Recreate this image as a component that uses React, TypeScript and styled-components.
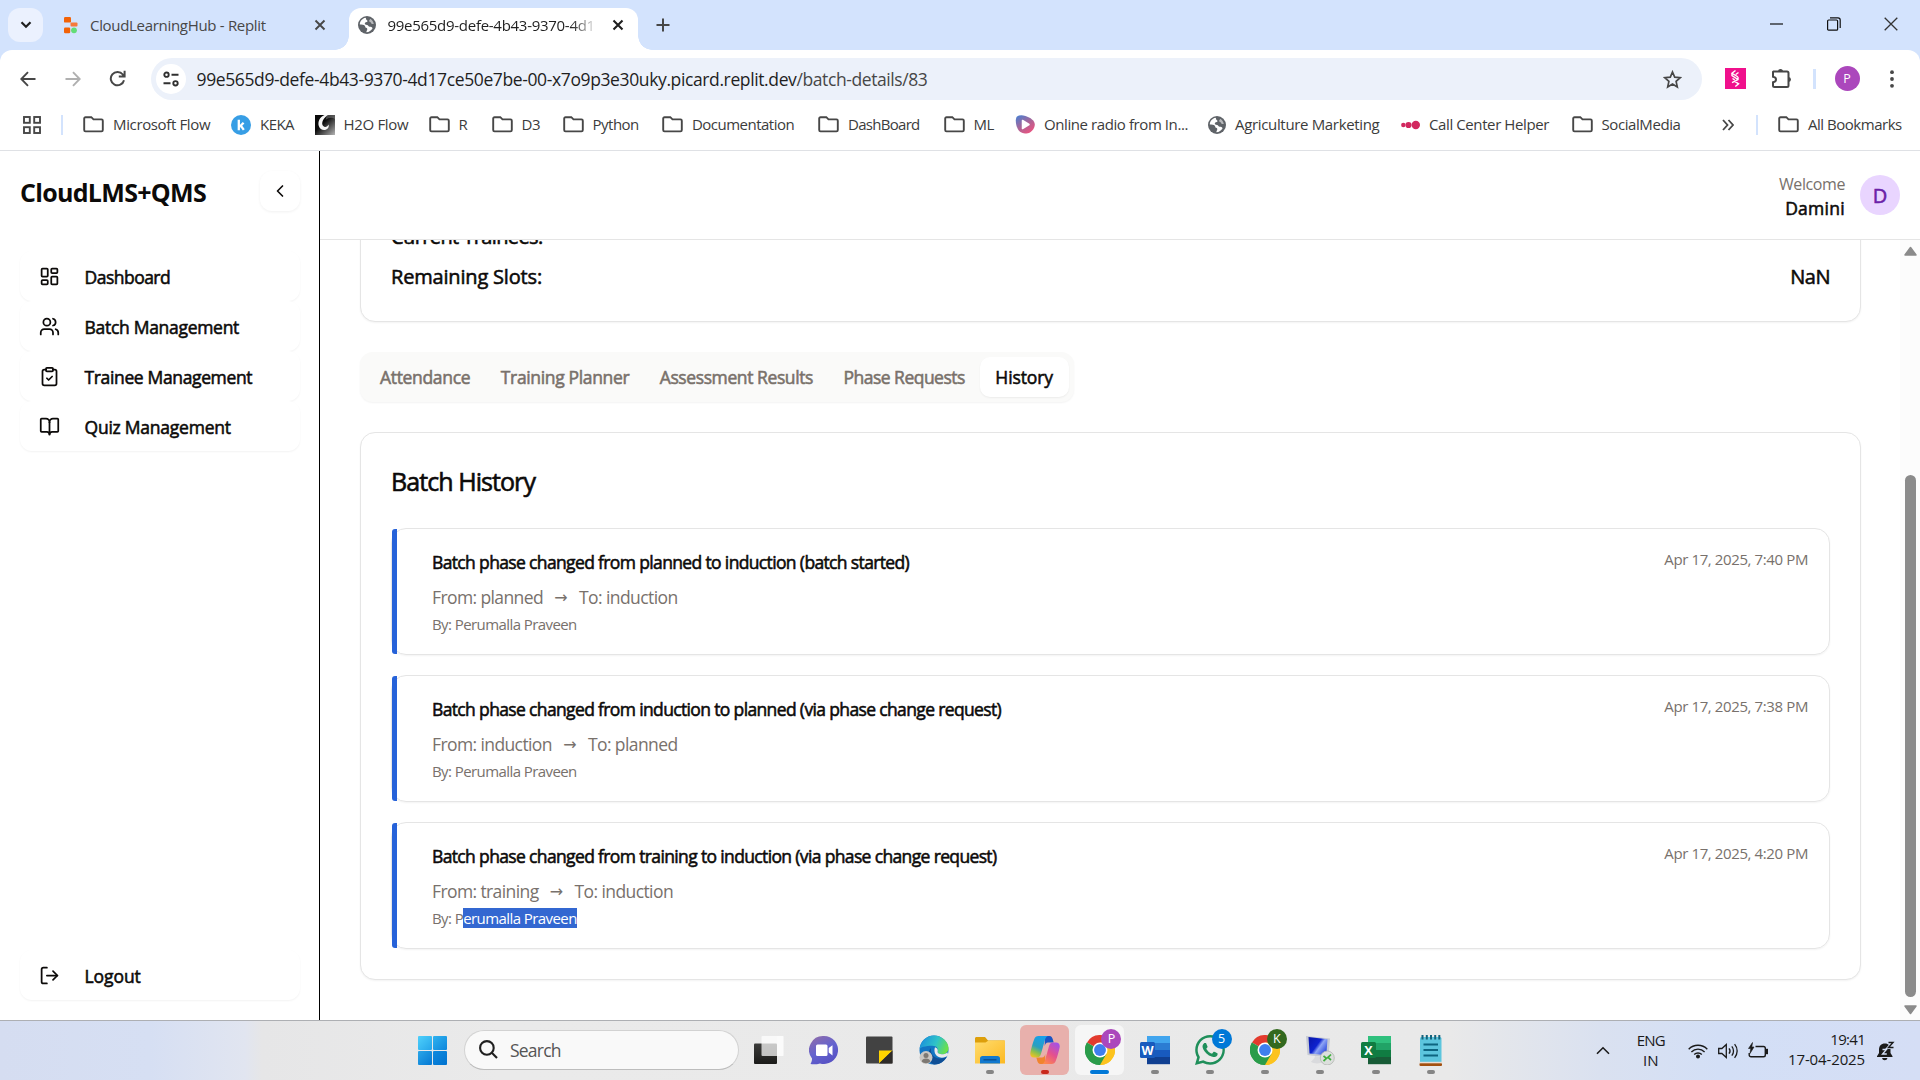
import React from 'react';
import styled, { createGlobalStyle, css } from 'styled-components';
import {
  BookOpen,
  ChevronLeft,
  ClipboardCheck,
  LayoutDashboard,
  LogOut,
  Users,
} from 'lucide-react';

const GlobalStyle = createGlobalStyle`
  *, *::before, *::after { box-sizing: border-box; }
  body {
    margin: 0;
    background: #fff;
    font-family: "Segoe UI", "Open Sans", "Noto Sans", sans-serif;
    color: #0c0a09;
    overflow: hidden;
  }
  svg { display: block; flex: none; }
`;

const medium = css`
  -webkit-text-stroke: 0.55px currentColor;
`;

const Screen = styled.div`
  width: 1920px;
  height: 1080px;
  display: flex;
  flex-direction: column;
  overflow: hidden;
`;

/* ---------- text ---------- */

const Text = styled.span<{ $size?: number; $track?: number; $color?: string; $medium?: boolean }>`
  font-size: ${(p) => p.$size ?? 15}px;
  letter-spacing: ${(p) => p.$track ?? 0}em;
  color: ${(p) => p.$color ?? 'inherit'};
  white-space: nowrap;
  ${(p) => p.$medium && medium}
`;

/* ---------- browser chrome ---------- */

const TabStrip = styled.div`
  height: 50px;
  flex: none;
  display: flex;
  background: #d3e3fd;
`;

const TabSearch = styled.div`
  width: 35px;
  height: 34px;
  margin: 8px 0 0 8px;
  border-radius: 12px;
  background: #ebf1fe;
  display: grid;
  place-items: center;
`;

const InactiveTab = styled.div`
  width: 305.5px;
  display: flex;
  align-items: center;
  padding-left: 20.5px;
  color: #474747;
`;

const ActiveTab = styled.div`
  position: relative;
  width: 289px;
  height: 42px;
  margin-top: 8px;
  padding: 0 0 8px 9.5px;
  display: flex;
  align-items: center;
  background: #fff;
  border-radius: 12px 12px 0 0;
  color: #1f1f1f;
  &::before,
  &::after {
    content: '';
    position: absolute;
    bottom: 0;
    width: 14px;
    height: 14px;
  }
  &::before {
    left: -14px;
    background: radial-gradient(circle at 0 0, transparent 13.5px, #fff 14px);
  }
  &::after {
    right: -14px;
    background: radial-gradient(circle at 100% 0, transparent 13.5px, #fff 14px);
  }
`;

const TabTitle = styled.div<{ $fade?: boolean; $width: number; $gap: number }>`
  width: ${(p) => p.$width}px;
  margin-left: ${(p) => p.$gap}px;
  overflow: hidden;
  line-height: 22px;
  display: flex;
  ${(p) => p.$fade && css`mask-image: linear-gradient(90deg, #000 88%, transparent 101%);`}
`;

const NewTab = styled.div`
  width: 50px;
  height: 50px;
  display: grid;
  place-items: center;
`;

const WindowControls = styled.div`
  margin-left: auto;
  margin-right: 1px;
  display: flex;
  height: 48px;
`;

const WindowButton = styled.div`
  width: 57px;
  display: grid;
  place-items: center;
`;

const Toolbar = styled.div`
  height: 57px;
  flex: none;
  display: flex;
  align-items: center;
  background: #fff;
  border-radius: 12px 12px 0 0;
`;

const ToolbarBack = styled.div`
  background: #d3e3fd;
  flex: none;
`;

const NavButtons = styled.div`
  width: 151px;
  display: flex;
  padding-left: 5px;
`;

const NavButton = styled.div`
  width: 45px;
  display: grid;
  place-items: center;
`;

const Omnibox = styled.div`
  width: 1551px;
  height: 42px;
  margin-top: 1px;
  border-radius: 21px;
  background: #ecf1fa;
  display: flex;
  align-items: center;
  padding: 0 20px 0 5px;
`;

const SiteInfo = styled.div`
  width: 30px;
  height: 30px;
  border-radius: 50%;
  background: #fff;
  display: grid;
  place-items: center;
  margin-right: 10.5px;
`;

const Spacer = styled.div`
  flex: 1;
`;

const Divider = styled.div<{ $margin: string }>`
  width: 2.5px;
  height: 20px;
  margin: ${(p) => p.$margin};
  background: #d3e3fd;
`;

const ToolbarRight = styled.div`
  display: flex;
  align-items: center;
  padding-left: 23px;
`;

const ProfileBadge = styled.div`
  width: 25px;
  height: 25px;
  border-radius: 50%;
  background: #ab47bc;
  color: #fff;
  display: grid;
  place-items: center;
  line-height: 25px;
`;

const BookmarksBar = styled.div`
  height: 44px;
  flex: none;
  display: flex;
  align-items: center;
  padding: 0 18px 8px 23px;
  background: #fff;
  border-bottom: 1px solid #dfe1e5;
  color: #3c3c3c;
`;

const Bookmark = styled.div<{ $width?: number }>`
  display: flex;
  align-items: center;
  width: ${(p) => (p.$width ? `${p.$width}px` : 'auto')};
  flex: none;
  gap: 9px;
  line-height: 20px;
  ${Text} { padding-bottom: 2px; }
`;

/* ---------- page ---------- */

const Page = styled.div`
  height: 869px;
  flex: none;
  display: flex;
  background: #fff;
`;

const Sidebar = styled.aside`
  width: 320px;
  flex: none;
  border-right: 1px solid #000;
  padding: 20px 19px 20px 20px;
  display: flex;
  flex-direction: column;
`;

const Brand = styled.div`
  display: flex;
  justify-content: space-between;
  height: 40px;
  margin-bottom: 40px;
`;

const BrandName = styled.h1`
  margin: 0;
  font-size: 25px;
  font-weight: 700;
  letter-spacing: -0.0277em;
  line-height: 42px;
`;

const CollapseButton = styled.button`
  width: 40px;
  height: 40px;
  padding: 0;
  border: 0;
  border-radius: 12px;
  background: #fff;
  box-shadow: 0 1px 3px rgba(0, 0, 0, 0.06);
  display: grid;
  place-items: center;
  color: #0c0a09;
`;

const NavItem = styled.a`
  height: 50px;
  flex: none;
  display: flex;
  align-items: center;
  padding-left: 19px;
  gap: 24.5px;
  border-radius: 12px;
  background: #fff;
  box-shadow: 0 1px 2px rgba(0, 0, 0, 0.05);
  line-height: 24px;
  ${Text} { padding-top: 1px; }
`;

const Workspace = styled.div`
  flex: 1;
  display: flex;
  flex-direction: column;
`;

const Header = styled.header`
  height: 89px;
  flex: none;
  border-bottom: 1px solid #e5e5e5;
  display: flex;
  justify-content: flex-end;
  align-items: center;
  gap: 15px;
  padding-right: 20px;
`;

const Greeting = styled.div`
  display: flex;
  flex-direction: column;
  align-items: flex-end;
  line-height: 24px;
  padding-top: 1px;
`;

const Avatar = styled.div`
  width: 40px;
  height: 40px;
  border-radius: 50%;
  background: #e9d5ff;
  color: #6b21a8;
  display: grid;
  place-items: center;
`;

const Body = styled.div`
  height: 780px;
  display: flex;
`;

const Content = styled.main`
  flex: 1;
  overflow: hidden;
  padding: 0 39px 0 40px;
  display: flex;
  flex-direction: column;
  gap: 30px;
`;

const Card = styled.section`
  flex: none;
  border: 1px solid #e5e5e5;
  border-radius: 15px;
  background: #fff;
  box-shadow: 0 1px 2px rgba(0, 0, 0, 0.05);
  padding: 30px;
`;

const SummaryCard = styled(Card)`
  margin-top: -50px;
  height: 132px;
  padding-top: 31px;
`;

const SummaryRow = styled.div`
  display: flex;
  justify-content: space-between;
  line-height: 30px;
  margin-bottom: 10px;
`;

const TabList = styled.div`
  align-self: flex-start;
  height: 50px;
  flex: none;
  padding: 5px;
  display: flex;
  border-radius: 13px;
  background: #fafaf9;
  box-shadow: 0 1px 2px rgba(0, 0, 0, 0.05);
`;

const Tab = styled.button<{ $active?: boolean }>`
  border: 0;
  font-family: inherit;
  height: 40px;
  padding: 1px 15.6px 0 15px;
  line-height: 39px;
  border-radius: 10px;
  background: ${(p) => (p.$active ? '#fff' : 'transparent')};
  color: ${(p) => (p.$active ? '#0c0a09' : '#79716b')};
  box-shadow: ${(p) => (p.$active ? '0 1px 2px rgba(0,0,0,0.06)' : 'none')};
`;

const CardTitle = styled.h2`
  margin: 0 0 29px;
  padding-top: 1px;
  font-size: 25px;
  font-weight: 400;
  line-height: 35px;
  letter-spacing: -0.0373em;
  -webkit-text-stroke: 0.6px currentColor;
`;

const HistoryList = styled.div`
  display: flex;
  flex-direction: column;
  gap: 20px;
`;

const HistoryItem = styled.article`
  position: relative;
  height: 127px;
  border: 1px solid #e5e5e5;
  border-radius: 15px;
  box-shadow: 0 1px 2px rgba(0, 0, 0, 0.05);
  padding: 20px 21px 20px 40px;
  display: flex;
  justify-content: space-between;
  &::before {
    content: '';
    position: absolute;
    left: 0;
    top: 0;
    bottom: 0;
    width: 5px;
    border-radius: 3px 0 0 3px;
    background: #2662d9;
  }
`;

const HistoryText = styled.div`
  display: flex;
  flex-direction: column;
`;

const HistoryTitle = styled.div`
  margin-top: -1px;
  line-height: 28px;
`;

const Transition = styled.div`
  display: flex;
  margin-top: 8px;
  line-height: 25px;
  color: #78716c;
`;

const Arrow = styled.span`
  width: 16px;
  margin: 0 10px;
  display: flex;
  justify-content: center;
  font-family: 'DejaVu Sans', sans-serif;
  font-size: 16px;
`;

const Author = styled.div`
  margin-top: 4px;
  line-height: 20px;
  color: #78716c;
`;

const Selected = styled.span`
  display: inline-block;
  height: 20px;
  background: #3367d1;
  color: #fff;
`;

const DateText = styled.div`
  line-height: 20px;
  color: #78716c;
`;

const Scrollbar = styled.div`
  width: 20px;
  background: #fcfcfc;
  display: flex;
  flex-direction: column;
  align-items: center;
  padding: 6px 0 5px 0;
`;

const Thumb = styled.div`
  width: 11px;
  height: 522px;
  margin-top: 219px;
  margin-bottom: auto;
  border-radius: 6px;
  background: #8b8b8b;
`;

/* ---------- taskbar ---------- */

const Taskbar = styled.footer`
  height: 60px;
  flex: none;
  display: flex;
  border-top: 1px solid #adafb3;
  background: linear-gradient(
    90deg,
    #d5ddf1 0,
    #d6dff3 150px,
    #e1e5f0 245px,
    #e6e6e7 262px,
    #eaeaea 500px,
    #e9e9e9 1450px,
    #dae1f0 1600px,
    #d3dff6 1720px,
    #d5def5 1920px
  );
`;

const StartButton = styled.div`
  margin: 15px 17px 0 418px;
  width: 29px;
  height: 29px;
  display: grid;
  grid-template-columns: 14px 14px;
  grid-template-rows: 14px 14px;
  gap: 1px;
`;

const Pane = styled.i<{ $from: string; $to: string }>`
  border-radius: 1px;
  background: linear-gradient(135deg, ${(p) => p.$from}, ${(p) => p.$to});
`;

const SearchBox = styled.div`
  width: 275px;
  height: 40px;
  margin-top: 9px;
  border: 1px solid #d2d2d2;
  border-bottom-color: #bdbdbd;
  border-radius: 20px;
  background: #f9f9f9;
  display: flex;
  align-items: center;
  padding: 0 0 1px 14px;
  gap: 12px;
`;

const Apps = styled.div`
  display: flex;
  margin-left: 2.5px;
`;

const AppCell = styled.div`
  width: 55.15px;
  display: flex;
  justify-content: center;
`;

const AppButton = styled.div<{ $bg?: string }>`
  position: relative;
  width: 49px;
  height: 50px;
  margin-top: 4px;
  border-radius: 6px;
  background: ${(p) => p.$bg ?? 'transparent'};
  display: flex;
  flex-direction: column;
  align-items: center;
  padding-top: 10px;
`;

const IconSlot = styled.div`
  height: 30px;
  display: flex;
  justify-content: center;
`;

const Indicator = styled.i<{ $width: number; $color: string }>`
  width: ${(p) => p.$width}px;
  height: 4px;
  margin-top: 5px;
  border-radius: 2px;
  background: ${(p) => p.$color};
`;

const Badge = styled.b<{ $bg: string }>`
  position: absolute;
  top: 4px;
  right: 3px;
  width: 20px;
  height: 20px;
  border-radius: 50%;
  background: ${(p) => p.$bg};
  color: #fff;
  font-size: 12.5px;
  font-weight: 400;
  line-height: 20px;
  text-align: center;
`;

const Tray = styled.div`
  flex: 1;
  display: flex;
  align-items: center;
  justify-content: flex-end;
  padding-right: 25px;
  color: #1a1a1a;
`;

const TrayStack = styled.div<{ $align: string; $margin: string }>`
  display: flex;
  flex-direction: column;
  align-items: ${(p) => p.$align};
  line-height: 20px;
  margin: ${(p) => p.$margin};
`;

/* ---------- drawings ---------- */

const FolderIcon = () => (
  <svg width="21" height="17" viewBox="0 0 21 17" fill="none" stroke="#474747" strokeWidth="1.9">
    <path d="M1.2 3.2V14c0 .8.5 1.4 1.3 1.4h16c.8 0 1.3-.6 1.3-1.4V4.8c0-.8-.5-1.4-1.3-1.4h-8L8.300 1.200H2.500c-.8 0-1.3.6-1.300 1.300z" />
  </svg>
);

const CloseIcon = ({ color }: { color: string }) => (
  <svg width="12" height="12" viewBox="0 0 12 12" stroke={color} strokeWidth="1.9">
    <path d="M1.500 1.500l9 9M10.500 1.500l-9 9" />
  </svg>
);

const GlobeIcon = () => (
  <svg width="18" height="18" viewBox="0 0 18 18">
    <circle cx="9" cy="9" r="9" fill="#5f6368" />
    <path d="M7.500 1.800C4 2.500 1.800 5.500 1.800 8.600c2.200.3 4.200.1 5 1.100.7.8.1 1.700 1.300 2.100 1 .3 1.400.9 1.100 2-.2.900-.9 1.300-.8 2.400 2.600 0 5-1.500 6.200-3.900-.6-1.300-1.700-1.500-2.900-1.500-1.200 0-1.300-1.900-2.700-1.900-1.300 0-2.200-.3-2.200-1.400 0-1.400 1.800-1 2.600-1.900.8-.9-.9-1.500-1.200-2.100-.3-.6.1-1.100-.7-1.700z" fill="#fff" />
    <path d="M12.200 2.700c-.3 1.300-1.300 1.500-1 2.500.3.900 1.500.6 1.700 1.600.2.900 1 1.300 2.900 1.200-.3-2.300-1.600-4.200-3.600-5.300z" fill="#fff" opacity=".55" />
  </svg>
);

const ReplitIcon = () => (
  <svg width="14" height="17" viewBox="0 0 14 17">
    <rect x="0" y="0" width="7" height="5.600" rx="1.200" fill="#f26207" />
    <rect x="6.500" y="5.600" width="7" height="4" rx="1" fill="#f5793b" />
    <rect x="0" y="10.500" width="6.200" height="5.800" rx="1.200" fill="#f26207" />
    <circle cx="10" cy="13.300" r="2.900" fill="#62dd77" />
  </svg>
);

const KekaIcon = () => (
  <svg width="20" height="20" viewBox="0 0 20 20">
    <circle cx="10" cy="10" r="10" fill="#379ee5" />
    <path d="M7.800 4.800v10.400M12.600 7.800l-4 4M9.800 10.600l3 4.300" stroke="#fff" strokeWidth="2.300" fill="none" />
  </svg>
);

const H2OIcon = () => (
  <svg width="20" height="20" viewBox="0 0 20 20">
    <defs>
      <linearGradient id="h2o" x1="0" x2="1" y1="0" y2="1">
        <stop offset=".4" stopColor="#0a0a0a" />
        <stop offset="1" stopColor="#b5b5b5" />
      </linearGradient>
    </defs>
    <rect width="20" height="20" fill="url(#h2o)" />
    <path d="M9.500 0C4.500 2 2.600 7 3.800 11c1 3.300 4.300 4.700 7 3.700 2.600-1 3.500-3.400 2.800-5.200-1 2-2.600 2.800-4.300 2.200C6 10.500 6.300 4.500 13 0z" fill="#f6f6f6" />
    <path d="M12 0h8v4c-3-2-6-1.800-9.500 1z" fill="#8a8a8a" opacity=".5" />
  </svg>
);

const RadioIcon = () => (
  <svg width="20" height="19" viewBox="0 0 20 19">
    <defs>
      <linearGradient id="radio" x1=".1" x2=".8" y1="0" y2="1">
        <stop offset="0" stopColor="#4b7fd0" />
        <stop offset=".55" stopColor="#b06394" />
        <stop offset="1" stopColor="#f0527e" />
      </linearGradient>
    </defs>
    <path d="M2 1.500C4 .2 7 0 10.500 1c5 1.500 9.300 4.800 9.300 8.500 0 4.300-4 9-8.500 9-3.500 0-6.500-1-8.500-4.500C.6 10 0 3.800 2 1.500z" fill="url(#radio)" />
    <path d="M7.500 5.500l6.500 4-6.500 4z" fill="#fff" stroke="#fff" strokeWidth="1.500" strokeLinejoin="round" />
  </svg>
);

const CallCenterIcon = () => (
  <svg width="19" height="10" viewBox="0 0 19 10" fill="#d2285f">
    <circle cx="2.300" cy="5" r="2.200" />
    <circle cx="7.500" cy="5" r="3.100" />
    <circle cx="14.800" cy="5" r="4.200" />
  </svg>
);

const AppsGridIcon = () => (
  <svg width="18" height="18" viewBox="0 0 18 18" fill="none" stroke="#474747" strokeWidth="1.900">
    <rect x="1" y="1" width="5.800" height="5.800" />
    <rect x="11.200" y="1" width="5.800" height="5.800" />
    <rect x="1" y="11.200" width="5.800" height="5.800" />
    <rect x="11.200" y="11.200" width="5.800" height="5.800" />
  </svg>
);

const ChromeIcon = () => (
  <svg width="30" height="30" viewBox="0 0 48 48">
    <path d="M24 24L3.200 12A24 24 0 0 1 44.800 12z" fill="#e33b2e" />
    <path d="M24 24L44.800 12A24 24 0 0 1 24 48z" fill="#fcc31e" />
    <path d="M24 24L24 48A24 24 0 0 1 3.200 12z" fill="#2a9c4a" />
    <path d="M24 12h20.800A24 24 0 0 1 24 48l10.400-18z" fill="#fcc31e" />
    <path d="M13.600 30L3.200 12A24 24 0 0 0 24 48l10.400-18z" fill="#2a9c4a" />
    <circle cx="24" cy="24" r="12" fill="#fff" />
    <circle cx="24" cy="24" r="9.500" fill="#3f7fee" />
  </svg>
);

const OfficeIcon = ({ letter, shades, tile }: { letter: string; shades: string[]; tile: string }) => (
  <svg width="30" height="30" viewBox="0 0 30 30">
    {shades.map((c, i) => (
      <rect key={c} x="7" y={1 + i * 7} width="23" height="7.200" fill={c} />
    ))}
    <rect x="0" y="7" width="15" height="16" rx="1.500" fill={tile} />
    <text x="7.500" y="19.500" fontFamily="Open Sans, sans-serif" fontWeight="700" fontSize="12.500" fill="#fff" textAnchor="middle">
      {letter}
    </text>
  </svg>
);

const TaskViewIcon = () => (
  <svg width="30" height="30" viewBox="0 0 30 30">
    <defs>
      <linearGradient id="tvd" x1="0" x2="0" y1="0" y2="1">
        <stop offset="0" stopColor="#3c3c3a" />
        <stop offset="1" stopColor="#1b1b19" />
      </linearGradient>
    </defs>
    <rect x="0" y="8.500" width="23" height="20.500" rx="1" fill="url(#tvd)" />
    <rect x="7.500" y="1" width="22" height="20" rx="1" fill="#fff" opacity=".72" />
    <path d="M23 8.500V1h6.500v20H23z" fill="#fff" opacity=".4" />
  </svg>
);

const ChatIcon = () => (
  <svg width="30" height="30" viewBox="0 0 30 30">
    <defs>
      <linearGradient id="chat" x1=".1" x2=".6" y1=".1" y2="1">
        <stop offset="0" stopColor="#8a6bae" />
        <stop offset=".5" stopColor="#6463cf" />
        <stop offset="1" stopColor="#5752c4" />
      </linearGradient>
    </defs>
    <path d="M15 1a14 14 0 1 1-4 27.400c-3 .9-6.500 1-9.500.600 1-1.800 1.600-3.600 1.500-5.500A14 14 0 0 1 15 1z" fill="url(#chat)" />
    <rect x="7" y="9.500" width="11.500" height="11.500" rx="1.500" fill="#fff" />
    <path d="M19.700 13l3.800-2.800v10.200L19.700 17.600z" fill="#fff" />
  </svg>
);

const StickyIcon = () => (
  <svg width="27" height="30" viewBox="0 0 27 30">
    <rect x="0" y="1.500" width="26.500" height="27" rx="1" fill="#424242" />
    <path d="M13 28.500V15.500h13.500z" fill="#ffd400" />
    <path d="M13 28.500L26.500 15.500v13z" fill="#2e2b29" />
  </svg>
);

const EdgeIcon = () => (
  <svg width="30" height="30" viewBox="0 0 30 30">
    <defs>
      <linearGradient id="edgeTop" x1="0" x2="1" y1=".3" y2=".6">
        <stop offset="0" stopColor="#1a8fdd" />
        <stop offset=".55" stopColor="#2fc3c8" />
        <stop offset="1" stopColor="#6de244" />
      </linearGradient>
    </defs>
    <circle cx="15" cy="15" r="14.500" fill="#1275c4" />
    <path d="M.6 14C1.500 6 7.500.5 15 .5S29.500 6.500 29.500 13c0 4-3 6.300-6.500 6.300-3 0-4.500-1.300-4.200-2.800.7-2.800-1-5.800-5.300-5.800C6 10.700 1 12.500.6 14z" fill="url(#edgeTop)" />
    <path d="M12 13c-1 5 2.500 10.500 9 10.500 3 0 5-.7 6.800-1.700C25 27 20.500 29.800 15 29.500 9 28 7.500 18 12 13z" fill="#0f4f96" />
    <path d="M16 12.200c3 .8 3 3.500 2.600 4.600-.3 1.800 2.400 2.700 5.400 2.400 2-.2 3.500-1 4.500-2l.7 3c-3 3-9 3.500-12 0-2.200-2.500-2-6-1.200-8z" fill="#eaeaea" />
    <circle cx="7" cy="22.500" r="6.500" fill="#c9c6c2" />
    <circle cx="7" cy="20.500" r="2.500" fill="#7d7873" />
    <path d="M2.800 26.500c0-4 8.400-4 8.400 0-2 2.300-6.400 2.300-8.400 0z" fill="#7d7873" />
  </svg>
);

const ExplorerIcon = () => (
  <svg width="30" height="30" viewBox="0 0 30 30">
    <defs>
      <linearGradient id="exp" x1="0" x2="1" y1="0" y2="1">
        <stop offset="0" stopColor="#ffdc6e" />
        <stop offset="1" stopColor="#fcb922" />
      </linearGradient>
    </defs>
    <path d="M0 3.500C0 2.700.6 2 1.500 2H10l3 3.500h16.500V12H0z" fill="#dd9f0b" />
    <path d="M0 7.500h10.500l3-2H30V28.500H0z" fill="url(#exp)" />
    <path d="M5 28.500v-5c0-1.500 1-2.500 2.500-2.500h15c1.500 0 2.500 1 2.500 2.500v5z" fill="#1279cf" />
    <path d="M8.500 24.800h13" stroke="#0a4c8e" strokeWidth="1.300" />
  </svg>
);

const CopilotIcon = () => (
  <svg width="30" height="30" viewBox="0 0 30 30">
    <defs>
      <linearGradient id="copA" x1=".6" x2=".2" y1="0" y2="1">
        <stop offset="0" stopColor="#18a0ea" />
        <stop offset=".5" stopColor="#2a9fc0" />
        <stop offset=".75" stopColor="#8bbf4e" />
        <stop offset="1" stopColor="#f3c321" />
      </linearGradient>
      <linearGradient id="copB" x1=".8" x2=".2" y1="0" y2="1">
        <stop offset="0" stopColor="#a350e8" />
        <stop offset=".5" stopColor="#e4518e" />
        <stop offset="1" stopColor="#ff8a4c" />
      </linearGradient>
    </defs>
    <path d="M15 1h4.500c2 0 2.700 1.500 3.200 3l1 3.500H18c-2 0-2.700 1.500-3.300 3.500z" fill="#1a54c4" />
    <path d="M15 29h-4.500c-2 0-2.700-1.500-3.200-3l-1-3.500H12c2 0 2.700-1.500 3.300-3.500z" fill="#f0842e" />
    <path d="M8.500 1H18c-1.700.6-2.500 2-3 3.800l-4 14c-.6 2.200-1.600 3.700-4.200 3.700H4C1.200 22.500-.2 20.500.4 17.500 1.200 13.500 2.700 8 4.300 4 5 2.200 6.300 1 8.500 1z" fill="url(#copA)" />
    <path d="M21.500 29H12c1.700-.6 2.500-2 3-3.800l4-14c.6-2.200 1.600-3.700 4.200-3.700H26c2.800 0 4.200 2 3.600 5-.8 4-2.300 9.500-3.900 13.500-.7 1.800-2 3-4.200 3z" fill="url(#copB)" />
  </svg>
);

const WhatsAppIcon = () => (
  <svg width="30" height="30" viewBox="0 0 24 24" fill="#1f8f5a">
    <path d="M12.050 0C5.500 0 .16 5.340.16 11.900c0 2.100.55 4.140 1.590 5.950L0 24l6.300-1.650a11.900 11.900 0 0 0 5.700 1.450c6.550 0 11.900-5.340 11.900-11.900C23.900 5.300 18.600 0 12.050 0zm0 21.800a9.900 9.900 0 0 1-5.030-1.380l-.36-.21-3.740.98 1-3.650-.24-.37A9.900 9.900 0 1 1 12.050 21.800z" />
    <path d="M17.470 14.380c-.3-.15-1.760-.87-2.030-.97-.27-.1-.47-.15-.67.15-.2.300-.77.970-.94 1.160-.17.200-.35.220-.64.080-.3-.15-1.260-.46-2.390-1.480-.88-.79-1.480-1.760-1.650-2.060-.17-.3-.02-.46.130-.6.130-.14.300-.35.450-.52.150-.17.200-.3.300-.5.100-.2.050-.37-.03-.52-.07-.15-.67-1.610-.91-2.210-.24-.58-.49-.5-.67-.51h-.57c-.2 0-.52.070-.79.370-.27.300-1.040 1.020-1.040 2.480s1.070 2.880 1.210 3.070c.15.200 2.100 3.200 5.080 4.490.71.300 1.260.49 1.690.62.710.23 1.360.2 1.870.12.570-.09 1.760-.72 2.010-1.410.25-.69.250-1.290.170-1.410-.07-.12-.27-.2-.57-.35z" />
  </svg>
);

const RemoteIcon = () => (
  <svg width="30" height="30" viewBox="0 0 30 30">
    <defs>
      <linearGradient id="rem" x1="0" x2="1" y1="0" y2=".7">
        <stop offset="0" stopColor="#0a16a8" />
        <stop offset=".5" stopColor="#0d22cf" />
        <stop offset=".65" stopColor="#8ea5f5" />
        <stop offset="1" stopColor="#2a48dd" />
      </linearGradient>
    </defs>
    <path d="M1 1l24 2.500-1.500 19L2.500 20z" fill="#c5c9d3" />
    <path d="M3.500 2l19 2.300-1.200 16L4.500 18.500z" fill="url(#rem)" />
    <path d="M10 21l8 1v4.500c-2 2.500-9 2.500-12 .500 1-2 3.500-2.500 4-6z" fill="#d9dadd" />
    <circle cx="22.300" cy="23" r="7" fill="#dcdfdc" stroke="#b3b5b3" strokeWidth=".8" />
    <path d="M18.500 21l3 2.300-3 2.700M26 19.500l-3 2.800 3 2.700" stroke="#3fae3c" strokeWidth="1.700" fill="none" />
  </svg>
);

const NotepadIcon = () => (
  <svg width="24" height="32" viewBox="0 0 24 32">
    <rect x="1" y="2" width="21.500" height="27" rx="1.500" fill="#5cc5dd" />
    <path d="M3.500 0v4.500M7.800 0v4.500M12 0v4.500M16.200 0v4.500M20.300 0v4.500" stroke="#14637c" strokeWidth="2" />
    <path d="M4.500 9.500h14.500M4.500 15h14.500M4.500 20.500h14.500" stroke="#0d6580" strokeWidth="1.900" />
    <rect x="0.500" y="28" width="22.500" height="3" rx="1" fill="#a3500f" />
    <rect x="0.500" y="26.800" width="22.500" height="1.500" fill="#e8ddd4" />
  </svg>
);

const Triangle = ({ down }: { down?: boolean }) => (
  <svg width="13" height="10" viewBox="0 0 13 10" fill="#8b8b8b" stroke="#8b8b8b" strokeWidth="1.500" strokeLinejoin="round">
    <path d={down ? 'M1 1h11L6.500 8.500z' : 'M1 9h11L6.500 1.500z'} />
  </svg>
);

/* ---------- data ---------- */

type Mark = { label: string; track: number; icon: React.ReactNode; width: number };

const bookmarks: Mark[] = [
  { label: 'Microsoft Flow', track: -0.0241, icon: <FolderIcon />, width: 148 },
  { label: 'KEKA', track: -0.0367, icon: <KekaIcon />, width: 83.500 },
  { label: 'H2O Flow', track: -0.0216, icon: <H2OIcon />, width: 114 },
  { label: 'R', track: 0, icon: <FolderIcon />, width: 63 },
  { label: 'D3', track: -0.03, icon: <FolderIcon />, width: 71 },
  { label: 'Python', track: -0.0335, icon: <FolderIcon />, width: 99.500 },
  { label: 'Documentation', track: -0.0345, icon: <FolderIcon />, width: 156 },
  { label: 'DashBoard', track: -0.0475, icon: <FolderIcon />, width: 125.500 },
  { label: 'ML', track: -0.03, icon: <FolderIcon />, width: 71.500 },
  { label: 'Online radio from In...', track: -0.0276, icon: <RadioIcon />, width: 193 },
  { label: 'Agriculture Marketing', track: -0.0224, icon: <GlobeIcon />, width: 193 },
  { label: 'Call Center Helper', track: -0.0264, icon: <CallCenterIcon />, width: 170.500 },
  { label: 'SocialMedia', track: -0.0277, icon: <FolderIcon />, width: 150 },
];

const navItems = [
  { label: 'Dashboard', track: -0.0293, Icon: LayoutDashboard },
  { label: 'Batch Management', track: -0.0165, Icon: Users },
  { label: 'Trainee Management', track: -0.0204, Icon: ClipboardCheck },
  { label: 'Quiz Management', track: -0.0132, Icon: BookOpen },
];

const tabs = [
  { label: 'Attendance', track: -0.0188 },
  { label: 'Training Planner', track: -0.0199 },
  { label: 'Assessment Results', track: -0.0232 },
  { label: 'Phase Requests', track: -0.0299 },
  { label: 'History', track: -0.0054, active: true },
];

const history = [
  { title: 'Batch phase changed from planned to induction (batch started)', from: 'planned', to: 'induction', date: 'Apr 17, 2025, 7:40 PM' },
  { title: 'Batch phase changed from induction to planned (via phase change request)', from: 'induction', to: 'planned', date: 'Apr 17, 2025, 7:38 PM' },
  { title: 'Batch phase changed from training to induction (via phase change request)', from: 'training', to: 'induction', date: 'Apr 17, 2025, 4:20 PM', selected: true },
];

type AppEntry = {
  name: string;
  icon: React.ReactNode;
  bg?: string;
  badge?: [string, string];
  bar?: [number, string];
};

const gray = '#858585';
const apps: AppEntry[] = [
  { name: 'tasks', icon: <TaskViewIcon /> },
  { name: 'chat', icon: <ChatIcon /> },
  { name: 'notes', icon: <StickyIcon /> },
  { name: 'edge', icon: <EdgeIcon /> },
  { name: 'explorer', icon: <ExplorerIcon />, bar: [8, gray] },
  { name: 'copilot', icon: <CopilotIcon />, bg: '#e8b0ac', bar: [8, '#c9281c'] },
  { name: 'chrome', icon: <ChromeIcon />, bg: '#f6f6f6', badge: ['P', '#ab47bc'], bar: [19, '#0078d7'] },
  { name: 'word', icon: <OfficeIcon letter="W" tile="#185abd" shades={['#41a5ee', '#2b7cd3', '#185abe', '#103f91']} />, bar: [8, gray] },
  { name: 'whatsapp', icon: <WhatsAppIcon />, badge: ['5', '#0078d7'], bar: [8, gray] },
  { name: 'chrome-k', icon: <ChromeIcon />, badge: ['K', '#33691e'], bar: [8, gray] },
  { name: 'remote', icon: <RemoteIcon />, bar: [8, gray] },
  { name: 'excel', icon: <OfficeIcon letter="X" tile="#107c41" shades={['#2fc07d', '#21a366', '#107c42', '#185c37']} />, bar: [8, gray] },
  { name: 'notepad', icon: <NotepadIcon />, bar: [8, gray] },
];

/* ---------- sections ---------- */

const BrowserTabs = () => (
  <TabStrip>
    <TabSearch>
      <svg width="12" height="8" viewBox="0 0 12 8" fill="none" stroke="#1f1f1f" strokeWidth="2.200">
        <path d="M1.500 1.300L6 5.800l4.500-4.500" />
      </svg>
    </TabSearch>
    <InactiveTab>
      <ReplitIcon />
      <TabTitle $width={223.5} $gap={12.500}>
        <Text $track={-0.0205}>CloudLearningHub - Replit</Text>
      </TabTitle>
      <CloseIcon color="#474747" />
    </InactiveTab>
    <ActiveTab>
      <GlobeIcon />
      <TabTitle $width={208} $gap={11.500} $fade>
        <Text $track={-0.0187}>99e565d9-defe-4b43-9370-4d1</Text>
      </TabTitle>
      <svg width="28" height="12" viewBox="-16 0 28 12" stroke="#1f1f1f" strokeWidth="2.100">
        <path d="M1.500 1.500l9 9M10.500 1.500l-9 9" />
      </svg>
    </ActiveTab>
    <NewTab>
      <svg width="14" height="14" viewBox="0 0 14 14" stroke="#474747" strokeWidth="2">
        <path d="M7 .5v13M.5 7h13" />
      </svg>
    </NewTab>
    <WindowControls>
      <WindowButton>
        <svg width="13" height="2" viewBox="0 0 13 2"><path d="M0 1h13" stroke="#111" strokeWidth="1.200" /></svg>
      </WindowButton>
      <WindowButton>
        <svg width="14" height="14" viewBox="0 0 14 14" fill="none" stroke="#111" strokeWidth="1.200">
          <rect x=".6" y="3" width="10" height="10.200" rx="1" />
          <path d="M3 .8h8c1.200 0 2.200 1 2.200 2.200V11" />
        </svg>
      </WindowButton>
      <WindowButton>
        <svg width="14" height="14" viewBox="0 0 14 14" stroke="#333" strokeWidth="1.300">
          <path d="M.7.7l12.600 12.600M13.300.7L.7 13.300" />
        </svg>
      </WindowButton>
    </WindowControls>
  </TabStrip>
);

const BrowserToolbar = () => (
  <ToolbarBack>
    <Toolbar>
      <NavButtons>
        <NavButton>
          <svg width="16" height="16" viewBox="0 0 16 16" fill="none" stroke="#474747" strokeWidth="1.900"><path d="M15.500 8H1.500M8 1.200L1.300 8 8 14.800" /></svg>
        </NavButton>
        <NavButton>
          <svg width="16" height="16" viewBox="0 0 16 16" fill="none" stroke="#b0b0b0" strokeWidth="1.900"><path d="M.5 8h14M8 1.200L14.700 8 8 14.800" /></svg>
        </NavButton>
        <NavButton>
          <svg width="17" height="17" viewBox="0 0 17 17" fill="none" stroke="#474747" strokeWidth="2"><path d="M15 10.200A6.700 6.700 0 1 1 13.800 4.500L15.500 6.500M15.600.8v5.800H9.800" /></svg>
        </NavButton>
      </NavButtons>
      <Omnibox>
        <SiteInfo>
          <svg width="16" height="16" viewBox="0 0 16 16" fill="none" stroke="#303030" strokeWidth="1.900">
            <circle cx="3.500" cy="3.700" r="2.200" />
            <path d="M8.500 3.700H15.500M.5 12.300H7.500" />
            <circle cx="12.500" cy="12.300" r="2.200" />
          </svg>
        </SiteInfo>
        <Text $size={17.500} $track={-0.0217} $color="#1f1f1f">99e565d9-defe-4b43-9370-4d17ce50e7be-00-x7o9p3e30uky.picard.replit.dev</Text>
        <Text $size={17.500} $track={-0.0233} $color="#474747">/batch-details/83</Text>
        <Spacer />
        <svg width="19" height="19" viewBox="0 0 19 19" fill="none" stroke="#474747" strokeWidth="1.700">
          <path d="M9.500 2l2.200 5.200 5.600.5-4.200 3.700 1.200 5.500-4.800-2.900-4.800 2.900 1.200-5.500L1.700 7.700l5.600-.5z" />
        </svg>
      </Omnibox>
      <ToolbarRight>
        <svg width="21" height="21" viewBox="0 0 21 21">
          <rect width="21" height="21" fill="#f0108c" />
          <path d="M10.500 2.500L7 5.300l6 3.700M13.500 4.500l-2.800 2M7 5.300v2.400l6 3.800M13 9v2.500l-6 3.200M7.500 10.500l2.200 1.300M10.300 18.500l3.300-2.700-3.800-2.500" fill="none" stroke="#fff" strokeWidth="1.400" />
        </svg>
        <svg width="48" height="21" viewBox="-25 0 48 21">
          <path d="M2.500 3.500h13.500a1.500 1.500 0 0 1 1.500 1.500v12.500a1.500 1.500 0 0 1-1.500 1.500H3.500a1.500 1.500 0 0 1-1.500-1.500v-3.200c4-.6 4-5 0-5.600V4z" fill="none" stroke="#474747" strokeWidth="2" />
          <path d="M7 3.500a2.500 2.500 0 0 1 5 0zM17.500 9a2.500 2.500 0 0 1 0 5z" fill="#474747" />
        </svg>
        <Divider $margin="0 19px 0 19px" />
        <ProfileBadge><Text $size={12.500}>P</Text></ProfileBadge>
        <svg width="36" height="18" viewBox="-30 0 36 18" fill="#474747">
          <circle cx="2" cy="2.200" r="1.900" /><circle cx="2" cy="9" r="1.900" /><circle cx="2" cy="15.800" r="1.900" />
        </svg>
      </ToolbarRight>
    </Toolbar>
  </ToolbarBack>
);

const Bookmarks = () => (
  <BookmarksBar>
    <AppsGridIcon />
    <Divider $margin="0 20px 0 19.500px" />
    {bookmarks.map((b) => (
      <Bookmark key={b.label} $width={b.width}>
        {b.icon}
        <Text $track={b.track}>{b.label}</Text>
      </Bookmark>
    ))}
    <svg width="12" height="12" viewBox="0 0 12 12" fill="none" stroke="#474747" strokeWidth="1.800"><path d="M1 1l4.500 5L1 11M6.500 1L11 6l-4.500 5" /></svg>
    <Divider $margin="0 20px 0 22px" />
    <Bookmark>
      <FolderIcon />
      <Text $track={-0.0321}>All Bookmarks</Text>
    </Bookmark>
  </BookmarksBar>
);

const SideNav = () => (
  <Sidebar>
    <Brand>
      <BrandName>CloudLMS+QMS</BrandName>
      <CollapseButton><ChevronLeft size={20} strokeWidth={2} /></CollapseButton>
    </Brand>
    {navItems.map(({ label, track, Icon }) => (
      <NavItem key={label}>
        <Icon size={21} strokeWidth={2} />
        <Text $size={17.500} $track={track} $medium>{label}</Text>
      </NavItem>
    ))}
    <Spacer />
    <NavItem>
      <LogOut size={21} strokeWidth={2} />
      <Text $size={17.500} $track={-0.0035} $medium>Logout</Text>
    </NavItem>
  </Sidebar>
);

const BatchDetails = () => (
  <Content>
    <SummaryCard>
      <SummaryRow>
        <Text $size={20} $track={-0.03} $medium>Current Trainees:</Text>
      </SummaryRow>
      <SummaryRow>
        <Text $size={20} $track={-0.009} $medium>Remaining Slots:</Text>
        <Text $size={20} $track={-0.0256} $medium>NaN</Text>
      </SummaryRow>
    </SummaryCard>
    <TabList>
      {tabs.map((t) => (
        <Tab key={t.label} $active={t.active}>
          <Text $size={17.500} $track={t.track} $medium>{t.label}</Text>
        </Tab>
      ))}
    </TabList>
    <Card>
      <CardTitle>Batch History</CardTitle>
      <HistoryList>
        {history.map((h) => (
          <HistoryItem key={h.title}>
            <HistoryText>
              <HistoryTitle><Text $size={17.500} $track={-0.0367} $medium>{h.title}</Text></HistoryTitle>
              <Transition>
                <Text $size={17.500} $track={-0.0345}>From: {h.from}</Text>
                <Arrow>→</Arrow>
                <Text $size={17.500} $track={-0.0339}>To: {h.to}</Text>
              </Transition>
              <Author>
                {h.selected ? (
                  <Text $track={-0.0385}>By: P<Selected>erumalla Praveen</Selected></Text>
                ) : (
                  <Text $track={-0.0385}>By: Perumalla Praveen</Text>
                )}
              </Author>
            </HistoryText>
            <DateText><Text $track={-0.0257}>{h.date}</Text></DateText>
          </HistoryItem>
        ))}
      </HistoryList>
    </Card>
  </Content>
);

const WindowsTaskbar = () => (
  <Taskbar>
    <StartButton>
      <Pane $from="#4fd0fb" $to="#25a5ea" />
      <Pane $from="#2fb2ef" $to="#0d86dc" />
      <Pane $from="#2aa6e8" $to="#0578d3" />
      <Pane $from="#0f8ade" $to="#0072d0" />
    </StartButton>
    <SearchBox>
      <svg width="19" height="19" viewBox="0 0 19 19" fill="none" stroke="#1f1f1f" strokeWidth="2.100">
        <circle cx="7.900" cy="7.900" r="6.800" /><path d="M12.800 12.800l5.200 5.200" />
      </svg>
      <Text $size={17.500} $track={-0.045} $color="#555">Search</Text>
    </SearchBox>
    <Apps>
      {apps.map((a) => (
        <AppCell key={a.name}>
          <AppButton $bg={a.bg}>
            <IconSlot>{a.icon}</IconSlot>
            {a.badge && <Badge $bg={a.badge[1]}>{a.badge[0]}</Badge>}
            {a.bar && <Indicator $width={a.bar[0]} $color={a.bar[1]} />}
          </AppButton>
        </AppCell>
      ))}
    </Apps>
    <Tray>
      <svg width="14" height="9" viewBox="0 0 14 9" fill="none" stroke="#1a1a1a" strokeWidth="1.600"><path d="M1 7.800l6-6 6 6" /></svg>
      <TrayStack $align="center" $margin="-2px 23px 0 27px">
        <Text $track={-0.0499}>ENG</Text>
        <Text>IN</Text>
      </TrayStack>
      <svg width="20" height="16" viewBox="0 0 20 16" fill="none" stroke="#1a1a1a" strokeWidth="1.400">
        <path d="M.7 6.200a13 13 0 0 1 18.600 0M3.400 8.900a9.300 9.300 0 0 1 13.200 0M6.200 11.500a5.500 5.500 0 0 1 7.600 0" />
        <circle cx="10" cy="13.600" r="1.300" fill="#1a1a1a" />
      </svg>
      <svg width="30" height="16" viewBox="-10 0 30 16" fill="none" stroke="#1a1a1a" strokeWidth="1.300">
        <path d="M.7 5.500h3.200L8.300 1.500v13L3.900 10.500H.7zM11 5.300c1.200 1.500 1.200 3.900 0 5.400M13.800 3.300c2.300 2.700 2.300 6.700 0 9.400M16.600 1.200c3.400 4 3.400 9.600 0 13.600" />
      </svg>
      <svg width="30" height="18" viewBox="-10 0 30 18" fill="none" stroke="#1a1a1a" strokeWidth="1.400">
        <path d="M7.500 4.500h8c1 0 1.800.8 1.800 1.800v6.600c0 1-.8 1.800-1.800 1.800H3c-1 0-1.800-.8-1.800-1.800V11" />
        <path d="M18.200 7.500h1.200v4h-1.200z" fill="#1a1a1a" />
        <path d="M4.500.5L.5 6.500h2.300L2 11.500l4-6.500H3.800z" fill="#1a1a1a" strokeWidth=".6" />
      </svg>
      <TrayStack $align="flex-end" $margin="-3px 11px 0 20px">
        <Text $track={-0.0473}>19:41</Text>
        <Text $track={-0.0085}>17-04-2025</Text>
      </TrayStack>
      <svg width="19" height="20" viewBox="0 0 19 20">
        <path d="M9 2.500c-4 0-6 2.600-6 6V12L1 15.200V16h15.500v-.8L14.500 12V8.500c0-3.400-2-6-5.500-6zM6 17h5.500a2.800 2.800 0 0 1-5.500 0z" fill="#1a1a1a" />
        <path d="M6.500 8.500h4l-4 4.500h4.300" fill="none" stroke="#d4dff5" strokeWidth="1.300" />
        <path d="M12.500 1.500h4.500l-4.500 5h5" fill="none" stroke="#d4dff5" strokeWidth="3" />
        <path d="M12.500 1.500h4.500l-4.500 5h5" fill="none" stroke="#1a1a1a" strokeWidth="1.400" />
      </svg>
    </Tray>
  </Taskbar>
);

export default function App() {
  return (
    <Screen>
      <GlobalStyle />
      <BrowserTabs />
      <BrowserToolbar />
      <Bookmarks />
      <Page>
        <SideNav />
        <Workspace>
          <Header>
            <Greeting>
              <Text $size={16} $track={-0.0258} $color="#78716c">Welcome</Text>
              <Text $size={17.500} $track={0.016} $medium>Damini</Text>
            </Greeting>
            <Avatar><Text $size={20} $medium>D</Text></Avatar>
          </Header>
          <Body>
            <BatchDetails />
            <Scrollbar>
              <Triangle />
              <Thumb />
              <Triangle down />
            </Scrollbar>
          </Body>
        </Workspace>
      </Page>
      <WindowsTaskbar />
    </Screen>
  );
}
